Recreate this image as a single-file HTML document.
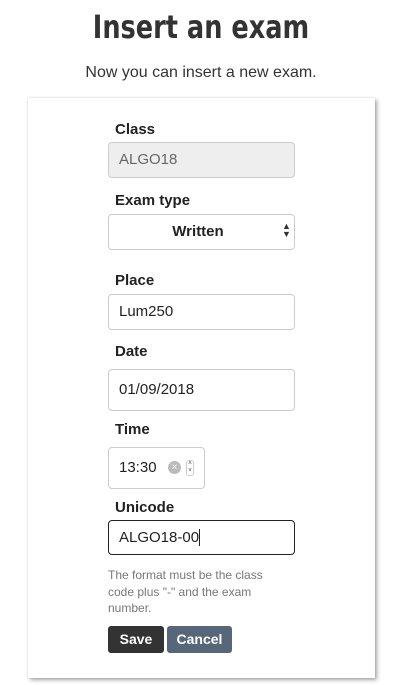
<!DOCTYPE html>
<html><head><style>
body{margin:0;width:402px;height:685px;background:#fff;font-family:"Liberation Sans",sans-serif;color:#333;position:relative;overflow:hidden}
.a{position:absolute}
h1{position:absolute;left:0;width:402px;top:8px;margin:0;text-align:center;font-family:"DejaVu Sans",sans-serif;font-weight:bold;font-size:32px;color:#333;transform:scaleX(0.8);transform-origin:201px 0}
.sub{left:0;width:402px;top:64px;text-align:center;font-size:16px}
.card{left:28px;top:98px;width:347px;height:580px;background:#fff;box-shadow:2px 2px 4px rgba(0,0,0,.35),0 0 2px rgba(0,0,0,.12)}
.lbl{left:115px;font-weight:bold;font-size:15px;color:#222}
.in{left:108px;width:185px;border:1px solid #ccc;border-radius:4px;font-size:15px;box-sizing:content-box;line-height:normal}
.in span{position:absolute;left:10px}
</style></head><body>
<h1>Insert an exam</h1>
<div class="a sub">Now you can insert a new exam.</div>
<div class="a card"></div>
<div class="a lbl" style="top:121px">Class</div>
<div class="a in" style="top:142px;height:34px;background:#eee"><span style="top:8px;color:#666">ALGO18</span></div>
<div class="a lbl" style="top:192px">Exam type</div>
<div class="a in" style="top:214px;height:34px;background:#fff"><span style="top:8px;left:0;width:178px;text-align:center;font-weight:bold;color:#222">Written</span><span style="top:7px;left:173px;font-size:9px;line-height:8px">▲<br>▼</span></div>
<div class="a lbl" style="top:272px">Place</div>
<div class="a in" style="top:294px;height:34px"><span style="top:8px;color:#222">Lum250</span></div>
<div class="a lbl" style="top:343px">Date</div>
<div class="a in" style="top:369px;height:40px"><span style="top:11px;color:#222">01/09/2018</span></div>
<div class="a lbl" style="top:421px">Time</div>
<div class="a in" style="top:447px;height:40px;width:95px"><span style="top:11px;color:#222">13:30</span><span style="top:13px;left:59px;width:13px;height:13px;border-radius:50%;background:#bbb;color:#fff;font-size:10px;line-height:13px;text-align:center">×</span><span style="top:12px;left:77px;width:6px;height:14px;border:1px solid #ccc;border-radius:3px;font-size:6px;line-height:7px;text-align:center">˄<br>˅</span></div>
<div class="a lbl" style="top:499px">Unicode</div>
<div class="a in" style="top:520px;height:33px;border-color:#222"><span style="top:8px;color:#222">ALGO18-00<span style="position:static;border-right:1px solid #222"></span></span></div>
<div class="a" style="left:108px;top:567px;width:172px;font-size:12px;line-height:16.5px;color:#777">The format must be the class code plus "-" and the exam number.</div>
<div class="a" style="left:108px;top:626px;width:56px;height:27px;background:#333;border-radius:3px;color:#fff;font-weight:bold;font-size:14px;text-align:center;line-height:27px">Save</div>
<div class="a" style="left:167px;top:626px;width:65px;height:27px;background:#56677a;border-radius:3px;color:#fff;font-weight:bold;font-size:14px;text-align:center;line-height:27px">Cancel</div>
</body></html>
